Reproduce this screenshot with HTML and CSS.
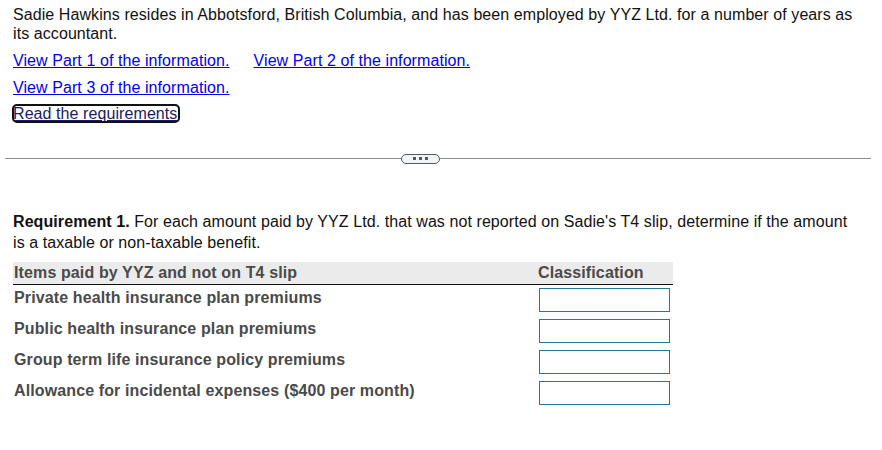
FILE: index.html
```html
<!DOCTYPE html>
<html>
<head>
<meta charset="utf-8">
<link rel="stylesheet" href="styles.css">
</head>
<body>
<div class="intro">
  <p class="lead">Sadie Hawkins resides in Abbotsford, British Columbia, and has been employed by YYZ Ltd. for a number of years as its accountant.</p>
  <div class="links">
    <a href="#" class="link">View Part 1 of the information.</a>
    <a href="#" class="link">View Part 2 of the information.</a>
  </div>
  <div class="links">
    <a href="#" class="link">View Part 3 of the information.</a>
  </div>
  <div class="links">
    <a href="#" class="link req">Read the requirements</a>
  </div>
</div>
<div class="divider">
  <span class="line left"></span>
  <span class="pill"><i></i><i></i><i></i></span>
  <span class="line right"></span>
</div>
<div class="content">
  <p class="question"><b>Requirement 1.</b> For each amount paid by YYZ Ltd. that was not reported on Sadie's T4 slip, determine if the amount is a taxable or non-taxable benefit.</p>
  <table class="grid">
    <thead>
      <tr><th class="c1">Items paid by YYZ and not on T4 slip</th><th class="c2">Classification</th></tr>
    </thead>
    <tbody>
      <tr><td class="c1">Private health insurance plan premiums</td><td class="c2"><span class="box"></span></td></tr>
      <tr><td class="c1">Public health insurance plan premiums</td><td class="c2"><span class="box"></span></td></tr>
      <tr><td class="c1">Group term life insurance policy premiums</td><td class="c2"><span class="box"></span></td></tr>
      <tr><td class="c1">Allowance for incidental expenses ($400 per month)</td><td class="c2"><span class="box"></span></td></tr>
    </tbody>
  </table>
</div>
</body>
</html>
```
FILE: styles.css
```css
html, body {
  margin: 0;
  padding: 0;
  background: #fff;
}
body {
  font-family: "Liberation Sans", Arial, sans-serif;
  font-size: 16px;
  color: #000;
  letter-spacing: 0.08px;
}
.intro {
  padding: 5px 20px 0 13px;
}
.lead {
  margin: 0;
  line-height: 19px;
  color: #111;
}
.links {
  display: flex;
  gap: 24px;
  line-height: 19px;
  margin-top: 8px;
}
.link {
  color: #0000ee;
  text-decoration: underline;
  text-underline-offset: 1px;
}
.req {
  color: #1a1a66;
  outline: 2px solid #111;
  outline-offset: -1px;
  border-radius: 4px;
  line-height: 17px;
  padding-right: 2px;
}
.divider {
  display: flex;
  align-items: center;
  margin: 31px 11px 0 5px;
  height: 11px;
}
.line {
  height: 1px;
  background: #878d95;
}
.line.left {
  width: 396px;
}
.line.right {
  flex: 1;
}
.pill {
  width: 37px;
  height: 8px;
  border: 1.5px solid #4f5a66;
  border-radius: 6px;
  background: #f3f4f6;
  display: flex;
  align-items: center;
  justify-content: center;
  gap: 3px;
}
.pill i {
  width: 3px;
  height: 3px;
  background: #4f5a66;
  display: block;
}
.content {
  padding: 0 20px 0 13px;
  margin-top: 47px;
}
.question {
  margin: 0;
  line-height: 21px;
  color: #111;
}
.grid {
  border-collapse: collapse;
  margin-top: 9px;
  width: 660px;
  color: #4a4a4a;
  font-weight: bold;
  letter-spacing: 0.12px;
}
.grid thead tr {
  height: 22px;
}
.grid th {
  background: #ebebeb;
  text-align: left;
  padding: 1px 0 0 1px;
  border-bottom: 1px solid #111;
  line-height: 20px;
  vertical-align: top;
}
.grid th.c2 {
  padding-left: 12px;
}
.grid tbody tr {
  height: 31px;
}
.grid tbody tr:first-child {
  height: 32px;
}
.grid td {
  padding: 3px 0 0 1px;
  line-height: 20px;
  vertical-align: top;
}
.grid td.c2 {
  width: 134px;
  padding: 3px 0 0 13px;
}
.box {
  display: block;
  width: 129px;
  height: 22px;
  border: 1px solid #1f7a96;
  background: #fff;
}
```
